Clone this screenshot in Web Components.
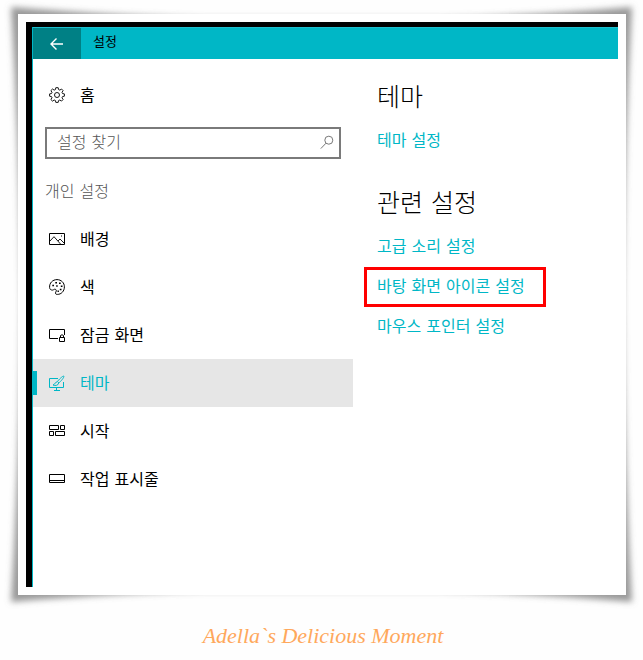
<!DOCTYPE html>
<html lang="ko">
<head>
<meta charset="utf-8">
<meta name="viewport" content="width=device-width, initial-scale=1">
<title>설정</title>
<style>
  body {
    margin: 0;
    background-color: #fefefe;
    color: #000;
    font: 16px/24px "DejaVu Sans", "Noto Sans CJK KR", sans-serif;
    --accent: #00b7c6;
  }
</style>
</head>
<body>
  <photo-frame>
    <settings-window heading="설정">
      <nav-item slot="side" icon="gear">홈</nav-item>
      <search-box slot="side" label="설정 찾기"></search-box>
      <nav-title slot="side">개인 설정</nav-title>
      <nav-item slot="side" icon="picture">배경</nav-item>
      <nav-item slot="side" icon="palette">색</nav-item>
      <nav-item slot="side" icon="lock">잠금 화면</nav-item>
      <nav-item slot="side" icon="theme" selected>테마</nav-item>
      <nav-item slot="side" icon="start">시작</nav-item>
      <nav-item slot="side" icon="taskbar">작업 표시줄</nav-item>

      <link-group heading="테마">
        <setting-link>테마 설정</setting-link>
      </link-group>
      <link-group heading="관련 설정">
        <setting-link>고급 소리 설정</setting-link>
        <setting-link marked>바탕 화면 아이콘 설정</setting-link>
        <setting-link>마우스 포인터 설정</setting-link>
      </link-group>
    </settings-window>
    <span slot="caption">Adella`s Delicious Moment</span>
  </photo-frame>

<script>
const ICONS = {
  back: `<path d="M2 8H14M7.5 2.5L2 8L7.5 13.5" stroke-width="1.4"/>`,
  gear: `<path d="M6.8 .7h2.4l.4 1.9 1.2.5 1.7-1.1 1.6 1.6-1.1 1.7.5 1.2 1.9.4v2.3l-1.9.4-.5 1.2 1.1 1.7-1.6 1.6-1.7-1.1-1.2.5-.4 1.9H6.8l-.4-1.9-1.2-.5-1.7 1.1-1.6-1.6L3 10.8l-.5-1.2-1.9-.4V6.9l1.9-.4L3 5.3 1.9 3.6 3.5 2l1.7 1.1 1.2-.5z" stroke-width=".9"/><circle cx="8" cy="8" r="2.5" stroke-width=".9"/>`,
  picture: `<path d="M.5 2.5h15v11H.5z"/><path d="M1 10l4-4.3 6.5 7.3M9 10l2-2 4.5 4.5" stroke-width=".9"/><path d="M12 5h1" />`,
  palette: `<path d="M.6 8.6C.2 4 3.7.6 8 .6c4.3 0 7.4 3.3 7.4 7.2 0 4.5-3.2 7.6-7 7.6-2.2 0-2.3-1.2-1.5-2.5.8-1.3.4-2.3-.6-2.6-1.3-.4-1.7.8-2.8.8C1.7 11.1.8 10.2.6 8.6z"/><path d="M3.3 6.5h1.7M6.3 3.8H8M10 4.2h1.7M11.8 7.3h1.7M10.800 10.500h1.700M8.500 12.300h1.400M7.200 7h1.500" stroke-width="1.600"/>`,
  lock: `<path d="M9 11.5H.5v-9h15V8"/><path d="M10.500 10.500h5v4h-5zM11.500 10V8.500q1.500-1.500 3 0V10"/>`,
  theme: `<path d="M9 3.500H.5v9h14V7M7.500 13v2M5 15.500h6"/><path d="M14.800 1.100c-1-.5-5.400 4-6.300 5.400l1.400 1.400c1.600-1.200 5.700-5.800 4.900-6.800zM8.300 6.800c-2-.1-2 2.500-4.300 3.200 2.300 1.100 5.600.3 5.600-2"/>`,
  start: `<path d="M.5 2.500h9v4h-9zM11.500 2.500h4v4h-4zM.5 8.500h4v4h-4zM6.500 8.500h9v4h-9z"/>`,
  taskbar: `<path d="M.5 3.500h15v8H.5zM1 9.500h14"/>`,
  search: `<circle cx="9.800" cy="5.200" r="4"/><path d="M7 8.200L1.800 13.600"/>`
};

function icon(name, size = 16) {
  return `<svg width="${size}" height="${size}" viewBox="0 0 16 16" fill="none" stroke="currentColor" aria-hidden="true">${ICONS[name]}</svg>`;
}

// White print whose corners curl up over a soft shadow
class PhotoFrame extends HTMLElement {
  connectedCallback() {
    this.attachShadow({ mode: "open" }).innerHTML = `
      <style>
        :host { display: block; padding: 14px 17px 8px 18px; }
        .print { position: relative; padding: 8px; }
        .shadow {
          position: absolute;
          inset: 0;
          width: 100%;
          height: 100%;
          overflow: visible;
        }
        .paper { position: absolute; inset: 0; background: #fff; }
        .content { position: relative; }
        .caption {
          margin: 26px 0 0 2px;
          text-align: center;
          color: #ffa85c;
          font: italic 22px/30px "Liberation Serif", serif;
        }
      </style>
      <div class="print">
        <svg class="shadow" viewBox="0 0 608 581" preserveAspectRatio="none" aria-hidden="true">
          <defs>
            <filter id="soft" x="-5%" y="-5%" width="110%" height="110%">
              <feGaussianBlur stdDeviation="3"/>
            </filter>
          </defs>
          <path d="M-7 -7Q100 2 190 4H418Q510 2 614 -7Q606 140 605 290Q606 440 614 588Q510 579 418 577H190Q100 579 -7 588Q2 440 3 290Q2 140 -7 -7Z" fill="#777" fill-opacity=".75" filter="url(#soft)"/>
        </svg>
        <div class="paper"></div>
        <div class="content"><slot></slot></div>
      </div>
      <div class="caption"><slot name="caption"></slot></div>
    `;
  }
}

class SettingsWindow extends HTMLElement {
  connectedCallback() {
    this.attachShadow({ mode: "open" }).innerHTML = `
      <style>
        :host {
          display: block;
          border: solid #000;
          border-width: 5px 0 0 6px;
        }
        .window { border-left: 1px solid var(--accent); background: #fff; }
        header {
          display: flex;
          align-items: center;
          height: 31px;
          border-top: 1px solid #20bfcc;
          background: var(--accent);
        }
        button {
          display: flex;
          align-items: center;
          justify-content: center;
          width: 48px;
          height: 100%;
          padding: 0;
          border: 0;
          background: #008085;
          color: #fff;
        }
        h1 { margin: 0 12px; font-size: 13px; line-height: 28px; height: 31px; font-weight: 400; }
        .columns { display: grid; grid-template-columns: 320px 1fr; }
        nav { padding: 12px 0 84px; }
        main { padding: 19px 0 0 11px; }
      </style>
      <div class="window">
        <header>
          <button type="button" aria-label="뒤로">${icon("back", 16)}</button>
          <h1>${this.getAttribute("heading")}</h1>
        </header>
        <div class="columns">
          <nav><slot name="side"></slot></nav>
          <main><slot></slot></main>
        </div>
      </div>
    `;
  }
}

class NavItem extends HTMLElement {
  connectedCallback() {
    this.attachShadow({ mode: "open" }).innerHTML = `
      <style>
        :host { display: block; }
        a {
          display: flex;
          align-items: center;
          gap: 15px;
          height: 48px;
          padding-right: 16px;
          color: inherit;
          text-decoration: none;
        }
        a::before { content: ""; width: 4px; height: 24px; margin-right: -3px; }
        :host([selected]) a { background: #e6e6e6; color: var(--accent); }
        :host([selected]) a::before { background: var(--accent); }
        svg { flex: none; }
        span { padding-top: 2px; }
      </style>
      <a href="#${this.getAttribute("icon")}">${icon(this.getAttribute("icon"))}<span><slot></slot></span></a>
    `;
  }
}

class NavTitle extends HTMLElement {
  connectedCallback() {
    this.attachShadow({ mode: "open" }).innerHTML = `
      <style>
        :host { display: block; padding: 21px 12px 11px; color: #555; }
        h2 { margin: 0; font: inherit; font-weight: 300; }
      </style>
      <h2><slot></slot></h2>
    `;
  }
}

class SearchBox extends HTMLElement {
  connectedCallback() {
    const label = this.getAttribute("label");
    this.attachShadow({ mode: "open" }).innerHTML = `
      <style>
        :host { display: block; margin: 8px 12px 0; }
        form {
          display: flex;
          align-items: center;
          border: 2px solid #7a7a7a;
          background: #fff;
        }
        input {
          flex: 1;
          min-width: 0;
          height: 28px;
          box-sizing: border-box;
          padding: 0 10px 2px;
          border: 0;
          outline: 0;
          background: none;
          font: inherit;
          font-weight: 300;
        }
        input::placeholder { color: #555; opacity: 1; }
        button {
          display: flex;
          padding: 0 4px;
          border: 0;
          background: none;
          color: #777;
        }
      </style>
      <form>
        <input type="text" aria-label="${label}" placeholder="${label}">
        <button type="button" aria-label="검색">${icon("search")}</button>
      </form>
    `;
  }
}

class LinkGroup extends HTMLElement {
  connectedCallback() {
    this.attachShadow({ mode: "open" }).innerHTML = `
      <style>
        :host { display: block; margin-bottom: 23px; }
        h2 { margin: 0 13px 3px; font-size: 25px; line-height: 40px; font-weight: 300; }
      </style>
      <h2>${this.getAttribute("heading")}</h2>
      <slot></slot>
    `;
  }
}

class SettingLink extends HTMLElement {
  connectedCallback() {
    this.attachShadow({ mode: "open" }).innerHTML = `
      <style>
        :host { display: flex; }
        a {
          padding: 5px 18px 5px 10px;
          border: 3px solid transparent;
          color: var(--accent);
          text-decoration: none;
        }
        :host([marked]) a { border-color: #f00; }
      </style>
      <a href="#setting"><slot></slot></a>
    `;
  }
}

customElements.define("photo-frame", PhotoFrame);
customElements.define("settings-window", SettingsWindow);
customElements.define("nav-item", NavItem);
customElements.define("nav-title", NavTitle);
customElements.define("search-box", SearchBox);
customElements.define("link-group", LinkGroup);
customElements.define("setting-link", SettingLink);
</script>
</body>
</html>
